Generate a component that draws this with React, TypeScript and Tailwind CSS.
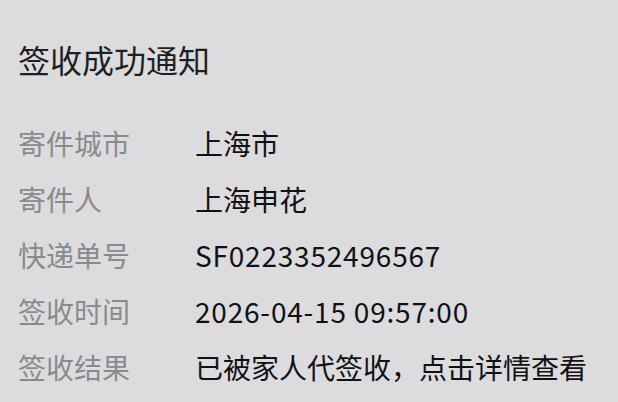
const ROWS: [string, string, boolean][] = [
  ['寄件城市', '上海市', false],
  ['寄件人', '上海申花', false],
  ['快递单号', 'SF0223352496567', true],
  ['签收时间', '2026-04-15 09:57:00', true],
  ['签收结果', '已被家人代签收，点击详情查看', false],
]

export default function App() {
  return (
    <div
      className="w-[618px] h-[402px] bg-[#dcdcde] pl-[18px] pt-[36px] overflow-hidden"
      style={{ fontFamily: '"Noto Sans CJK SC", "Noto Sans", sans-serif' }}
    >
      <h1 className="text-[32px] leading-[46px] text-[#1f1f1f]">签收成功通知</h1>
      <div className="mt-[33px] flex flex-col">
        {ROWS.map(([label, value, latin]) => (
          <div key={label} className="flex items-center h-[56px] text-[28px]">
            <span className="w-[177px] text-[#8a8a8c]">{label}</span>
            <span className={latin ? 'text-[#111] tracking-[0.8px]' : 'text-[#111]'}>{value}</span>
          </div>
        ))}
      </div>
    </div>
  )
}
